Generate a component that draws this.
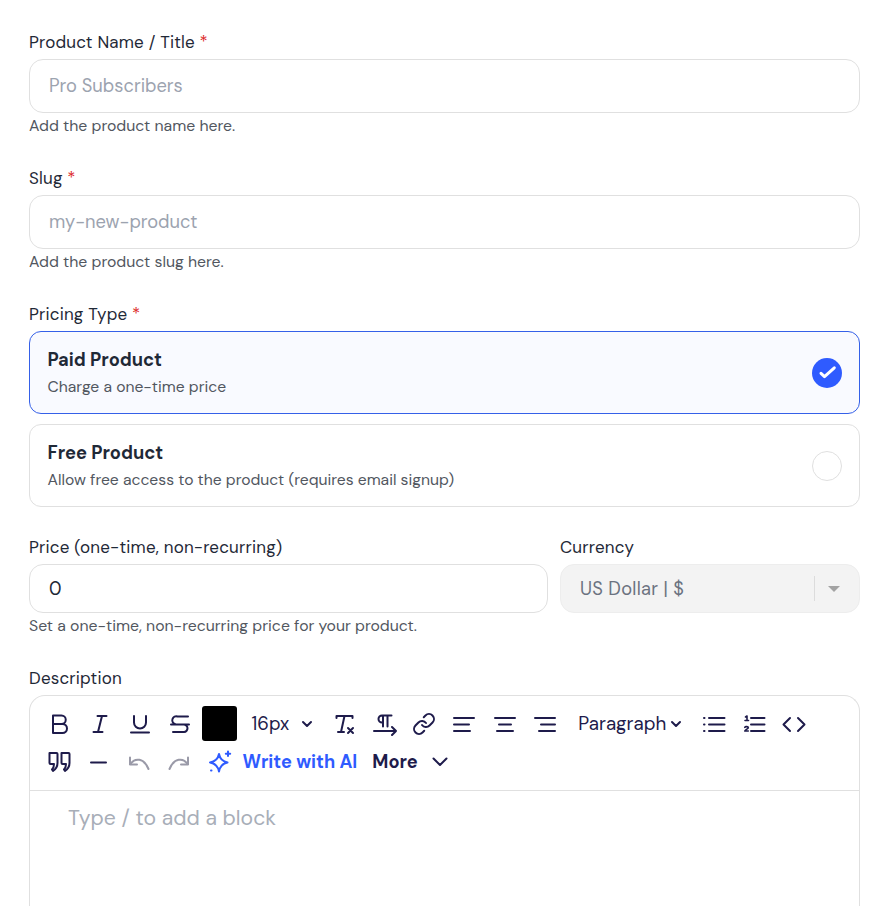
<div class="form">
  <section class="field">
    <div class="label">Product Name / Title <span class="req">*</span></div>
    <div class="input tall ph">Pro Subscribers</div>
    <div class="hint">Add the product name here.</div>
  </section>
  <section class="field">
    <div class="label">Slug <span class="req">*</span></div>
    <div class="input tall ph">my-new-product</div>
    <div class="hint">Add the product slug here.</div>
  </section>
  <section class="field pricing">
    <div class="label">Pricing Type <span class="req">*</span></div>
    <div class="cards">
      <div class="card active">
        <div>
          <div class="ctitle">Paid Product</div>
          <div class="csub">Charge a one-time price</div>
        </div>
        <svg width="30" height="30" viewBox="0 0 30 30"><circle cx="15" cy="15" r="15" fill="#2f5bff"/><path d="M9 15.300l3.500 3.300 9.800-8.800" fill="none" stroke="#fff" stroke-width="3" stroke-linecap="round" stroke-linejoin="round"/></svg>
      </div>
      <div class="card">
        <div>
          <div class="ctitle">Free Product</div>
          <div class="csub">Allow free access to the product (requires email signup)</div>
        </div>
        <span class="radio"></span>
      </div>
    </div>
  </section>
  <section class="field row">
    <div class="price">
      <div class="label">Price (one-time, non-recurring)</div>
      <div class="input val">0</div>
      <div class="hint">Set a one-time, non-recurring price for your product.</div>
    </div>
    <div class="currency">
      <div class="label">Currency</div>
      <div class="input select">
        <span class="selval">US Dollar | $</span>
        <span class="sep"></span>
        <span class="caret"></span>
      </div>
    </div>
  </section>
  <section class="field last">
    <div class="label">Description</div>
    <div class="editor">
      <div class="toolbar">
        <div class="tline first">
          <button aria-label="Bold"><svg viewBox="0 0 24 24"><path d="M5 3.500h8.500a4.200 4.200 0 0 1 0 8.500H5zM5 12h9.500a4.500 4.500 0 0 1 0 9H5z"/></svg></button>
          <button aria-label="Italic"><svg viewBox="0 0 24 24"><path d="M9.500 4h9M5.500 20h9M14 4l-4 16"/></svg></button>
          <button aria-label="Underline"><svg viewBox="0 0 24 24"><path d="M6 4v6.500a6 6 0 0 0 12 0V4M3 20.500h18"/></svg></button>
          <button aria-label="Strikethrough" class="b-s"><svg viewBox="0 0 24 24"><path d="M20 4.500H9.500a3.700 3.700 0 0 0-2.500 7.500M3 12.500h18M15.500 12.500a3.500 3.500 0 0 1 .5 7.500H5"/></svg></button>
          <span class="swatch"></span>
          <span class="drop size">16px<svg class="chev" viewBox="0 0 12 12"><path d="M2 4l4 4 4-4"/></svg></span>
          <button aria-label="Clear format"><svg viewBox="0 0 24 24"><path d="M3.500 6V4h16v2M11.500 4L8 20M5 20h6M15 16l5 5M20 16l-5 5"/></svg></button>
          <button aria-label="Text direction" class="b-dir"><svg viewBox="0 0 24 24"><path d="M10 3.500v11M14.500 3.500v11M18.500 3.500H9a3.500 3.500 0 0 0 0 7h1M1 19h22M19 15l4 4-4 4"/></svg></button>
          <button aria-label="Link" class="b-link"><svg viewBox="0 0 24 24"><path d="M10 13a5 5 0 0 0 7.540.54l3-3a5 5 0 0 0-7.070-7.070l-1.720 1.710M14 11a5 5 0 0 0-7.540-.54l-3 3a5 5 0 0 0 7.070 7.070l1.710-1.710"/></svg></button>
          <button aria-label="Align left" class="b-al"><svg viewBox="0 0 24 24"><path d="M2 6h20M2 12.500h15M2 19h16"/></svg></button>
          <button aria-label="Align center"><svg viewBox="0 0 24 24"><path d="M2 6h20M6 12.500h12M4 19h16"/></svg></button>
          <button aria-label="Align right" class="b-ar"><svg viewBox="0 0 24 24"><path d="M2 6h20M8 12.500h14M6 19h16"/></svg></button>
          <span class="drop para">Paragraph<svg class="chev" viewBox="0 0 12 12"><path d="M2 4l4 4 4-4"/></svg></span>
          <button aria-label="Bullet list"><svg viewBox="0 0 24 24"><path d="M7 6h15.500M7 12.500h15.500M7 19h15.500M2 6h.5M2 12.500h.5M2 19h.5"/></svg></button>
          <button aria-label="Numbered list"><svg viewBox="0 0 24 24"><path d="M9 6h13.500M9 12.500h13.500M9 19h13.500"/><path class="thin" d="M3.500 5l1.500-1v4.500M3 8.500h3.500M2.800 15.300c.5-1 3.500-1 3.500.5 0 1-3 1.700-3.500 3.200h3.500"/></svg></button>
          <button aria-label="Code"><svg viewBox="0 0 24 24"><path d="M8 6l-6.500 6.500L8 19M16 6l6.500 6.500L16 19"/></svg></button>
        </div>
        <div class="tline">
          <button aria-label="Quote" class="b-q"><svg viewBox="0 0 24 24"><path d="M2.500 3h7a1 1 0 0 1 1 1v9c0 3.500-1.500 6-4.500 8l-1-1.500c1.500-1.500 2-3 2-5.500H3.500a1 1 0 0 1-1-1zM14.500 3h7a1 1 0 0 1 1 1v9c0 3.500-1.500 6-4.500 8l-1-1.500c1.500-1.500 2-3 2-5.500h-3.500a1 1 0 0 1-1-1z"/></svg></button>
          <button aria-label="Horizontal rule"><svg viewBox="0 0 24 24"><path d="M4 12.500h15"/></svg></button>
          <button aria-label="Undo" class="gray"><svg viewBox="0 0 24 24"><path d="M3 7.500v7h7M3 14.500C8 7 17 8 21.500 19"/></svg></button>
          <button aria-label="Redo" class="gray b-redo"><svg viewBox="0 0 24 24"><path d="M21 7.500v7h-7M21 14.500C16 7 7 8 2.500 19"/></svg></button>
          <span class="ai">
            <svg viewBox="0 0 24 24"><path d="M11 4c1 5 3.500 7.500 8.500 8.500-5 1-7.500 3.500-8.500 9-1-5.500-3.500-8-9-9 5.500-1 8-3.500 9-8.500z"/><path d="M20 1.500v4.500M17.800 3.700h4.400M3 20.500h.5"/></svg>
            Write with AI
          </span>
          <span class="more">More</span>
          <svg class="morechev" viewBox="0 0 16 10"><path d="M1.500 1.500L8 8l6.500-6.500"/></svg>
        </div>
      </div>
      <div class="body">Type / to add a block</div>
    </div>
  </section>
</div>

<style>
  :global(body) { margin: 0; background: #fff; }
  :global(html), :global(body) { height: 906px; overflow: hidden; }
  .form {
    font-family: "DM Sans", Inter, "Noto Sans", sans-serif;
    font-optical-sizing: none;
    font-variation-settings: "opsz" 14;
    color: #1f2937;
    padding: 33px 31px 0 29px;
    box-sizing: border-box;
    width: 891px;
    height: 906px;
    overflow: hidden;
    display: flex;
    flex-direction: column;
  }
  .field { margin-bottom: 34px; }
  .field.pricing { margin-bottom: 31px; }
  .field.last { margin-bottom: 0; }
  .label { font-size: 17px; line-height: 19px; margin-bottom: 7px; color: #1f2937; letter-spacing: .18px; }
  .req { color: #dc2626; }
  .input {
    border: 1px solid #e0e0e0;
    border-radius: 14px;
    box-sizing: border-box;
    height: 49px;
    display: flex;
    align-items: center;
    padding: 0 19px;
    font-size: 18.300px;
    background: #fff;
  }
  .input.tall { height: 54px; }
  .ph { color: #9ca3af; }
  .val { color: #1f2937; }
  .hint { font-size: 15.800px; line-height: 18px; margin-top: 4px; color: #52575f; }
  .cards { display: flex; flex-direction: column; gap: 10px; }
  .card {
    box-sizing: border-box;
    height: 83px;
    border: 1px solid #e0e0e0;
    border-radius: 12px;
    padding: 0 17px 0 17.500px;
    display: flex;
    align-items: center;
    justify-content: space-between;
  }
  .card.active { border-color: #3560e8; background: #f9faff; }
  .ctitle { font-size: 18.300px; font-weight: 700; line-height: 24px; color: #1f2937; }
  .csub { font-size: 15.700px; line-height: 20px; margin-top: 5px; color: #52575f; }
  .radio { width: 30px; height: 30px; box-sizing: border-box; border: 1px solid #e0e0e0; border-radius: 50%; }
  .row { display: grid; grid-template-columns: 519px 300px; gap: 12px; }
  .select { background: #f3f3f3; color: #6b7280; border-color: #ededed; padding-right: 0; letter-spacing: .3px; }
  .selval { flex: 1; }
  .sep { width: 1px; height: 25px; background: #dcdcdc; }
  .caret { width: 0; height: 0; border: 6px solid transparent; border-top: 6.500px solid #a3a3a3; border-bottom: 0; margin: 0 19px 0 13px; }
  .editor { border: 1px solid #e0e0e0; border-radius: 16px 16px 0 0; border-bottom: 0; height: 300px; }
  .toolbar { padding: 8px 17.500px 0; height: 95px; box-sizing: border-box; border-bottom: 1px solid #e0e0e0; }
  .tline { display: flex; align-items: center; height: 38px; color: #1e1b4b; }
  .tline.first { height: 39px; }
  .tline svg { fill: none; stroke: currentColor; stroke-width: 2; stroke-linecap: round; stroke-linejoin: round; display: block; }
  .tline svg .thin { stroke-width: 1.600; }
  button { all: unset; display: flex; align-items: center; justify-content: center; width: 24px; height: 24px; flex: none; margin-right: 16px; }
  button svg { width: 24px; height: 24px; }
  .b-s { margin-right: 10px; }
  .swatch { width: 35px; height: 35px; background: #000; border-radius: 3px; flex: none; }
  .drop { display: flex; align-items: center; font-size: 18.500px; color: #1e1b4b; }
  .size { margin: 0 20px 0 15px; }
  .size .chev { margin-left: 12px; }
  .chev { width: 12px; height: 12px; }
  .para { margin: 0 20px 0 21px; font-size: 18.800px; }
  .para .chev { margin-left: 4px; }
  .b-dir { margin-right: 15px; }
  .b-al { margin-right: 17px; }
  .b-ar { margin-right: 0; }
  .gray { color: #9a9aa8; }
  .b-q { margin-left: -1px; }
  .b-redo { margin-right: 17px; }
  .ai { display: flex; align-items: center; gap: 11px; color: #2f5bff; font-weight: 700; font-size: 18.200px; }
  .ai svg { width: 24px; height: 24px; }
  .more { font-weight: 700; font-size: 18.200px; margin-left: 15px; color: #1e1b4b; }
  .morechev { width: 16px; height: 10px; margin-left: 14px; }
  .body { padding: 13px 38px; font-size: 21.200px; line-height: 28px; color: #a8aeb8; }
</style>
